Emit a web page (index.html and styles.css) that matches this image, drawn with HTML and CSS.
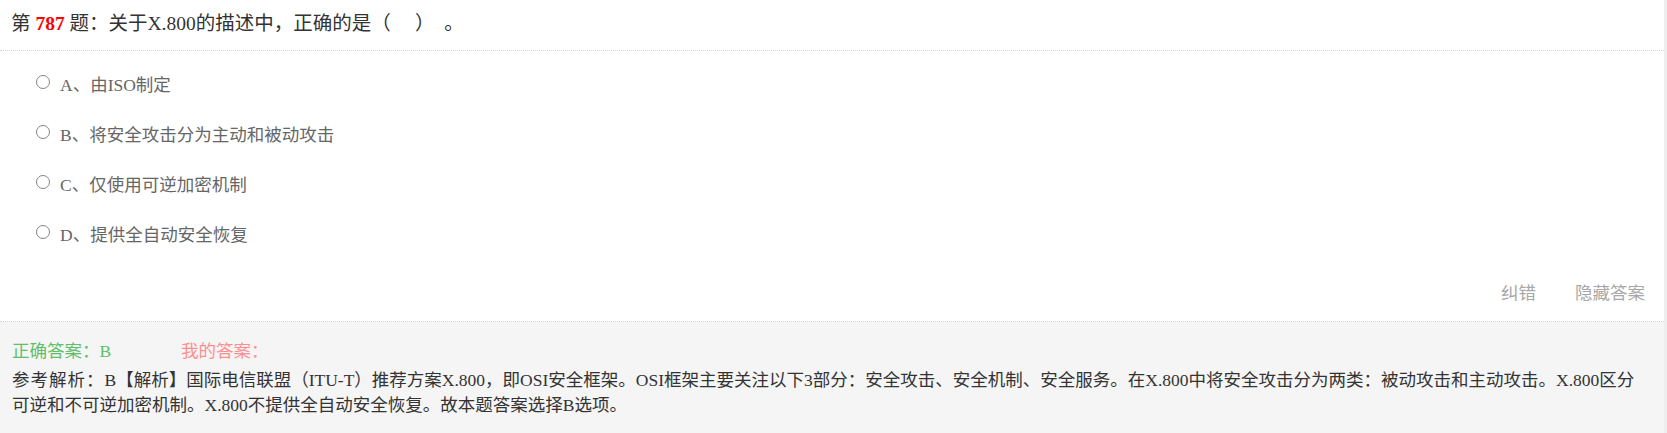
FILE: index.html
```html
<!DOCTYPE html>
<html lang="zh-CN">
<head>
<meta charset="utf-8">
<title>第787题</title>
<link rel="stylesheet" href="styles.css">
</head>
<body>
<div class="card">
  <div class="question">第 <b class="num">787</b> 题：关于X.800的描述中，正确的是（&nbsp;&nbsp;&nbsp;&nbsp;&nbsp;）&nbsp;&nbsp;。</div>
  <ul class="options">
    <li class="option"><span class="radio"></span><span class="opt-text">A、由ISO制定</span></li>
    <li class="option"><span class="radio"></span><span class="opt-text">B、将安全攻击分为主动和被动攻击</span></li>
    <li class="option"><span class="radio"></span><span class="opt-text">C、仅使用可逆加密机制</span></li>
    <li class="option"><span class="radio"></span><span class="opt-text">D、提供全自动安全恢复</span></li>
  </ul>
  <div class="actions">
    <span class="action">纠错</span>
    <span class="action">隐藏答案</span>
  </div>
  <div class="answer-box">
    <div class="answers">
      <span class="right-answer">正确答案：B</span>
      <span class="my-answer">我的答案：</span>
    </div>
    <p class="analysis"><span class="analysis-label">参考解析：</span>B【解析】国际电信联盟（ITU-T）推荐方案X.800，即OSI安全框架。OSI框架主要关注以下3部分：安全攻击、安全机制、安全服务。在X.800中将安全攻击分为两类：被动攻击和主动攻击。X.800区分可逆和不可逆加密机制。X.800不提供全自动安全恢复。故本题答案选择B选项。</p>
  </div>
</div>
</body>
</html>
```

FILE: styles.css
```css
html, body {
  margin: 0;
  padding: 0;
}

body {
  background: #eeeeee;
  font-family: "Liberation Serif", "Noto Sans CJK SC", serif;
  color: #333333;
  min-height: 100vh;
}

.card {
  width: calc(100% - 3px);
  min-height: 100vh;
  background: #ffffff;
  display: flex;
  flex-direction: column;
}

.question {
  height: 50px;
  line-height: 47px;
  padding: 0 11px;
  font-size: 19.5px;
  color: #333333;
  border-bottom: 1px dotted #d6d6d6;
  white-space: nowrap;
}

.num {
  color: #ff0000;
  font-weight: bold;
}

.options {
  list-style: none;
  margin: 0;
  padding: 7px 0 0 36px;
}

.option {
  display: flex;
  align-items: center;
  height: 50px;
  font-size: 17.5px;
  color: #666666;
}

.radio {
  width: 12px;
  height: 12px;
  border: 1.5px solid #858585;
  border-radius: 50%;
  background: #ffffff;
  margin-right: 10px;
  margin-top: -2px;
  flex: none;
}

.actions {
  display: flex;
  justify-content: flex-end;
  gap: 39px;
  padding: 7px 19px 0 0;
  height: 56px;
  line-height: 56px;
  font-size: 17.5px;
  color: #a8a8a8;
  border-bottom: 1px dotted #d6d6d6;
}

.answer-box {
  flex: 1;
  background: #f5f5f5;
  padding: 16px 24px 12px 12px;
  font-size: 17.5px;
}

.answers {
  display: flex;
  line-height: 26px;
}

.right-answer {
  color: #5cbf6c;
  width: 169px;
}

.my-answer {
  color: #ff8f8f;
}

.analysis {
  margin: 4px 0 0 0;
  line-height: 25px;
  color: #333333;
}

.analysis-label {
  letter-spacing: 1px;
}
```
